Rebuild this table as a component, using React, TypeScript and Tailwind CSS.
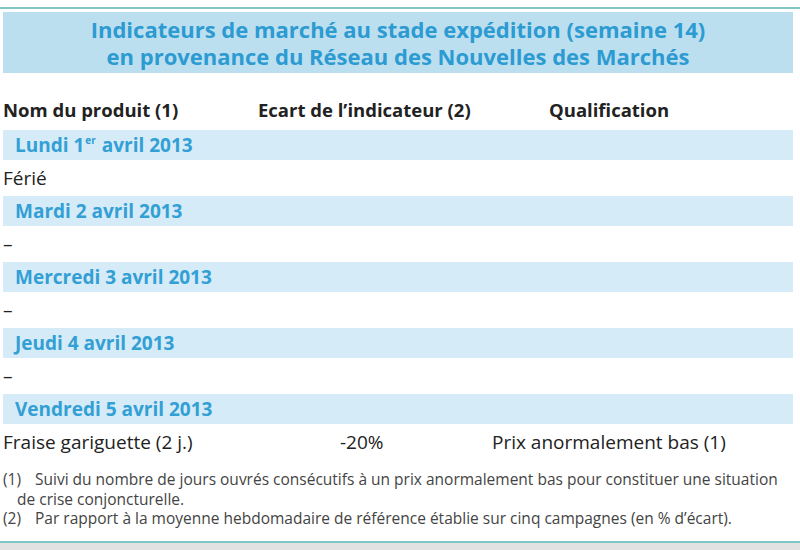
import React from "react";

const days = [
  { label: "Lundi 1", sup: "er", rest: "avril 2013", rows: [["Férié", "", ""]] },
  { label: "Mardi 2 avril 2013", rows: [["–", "", ""]] },
  { label: "Mercredi 3 avril 2013", rows: [["–", "", ""]] },
  { label: "Jeudi 4 avril 2013", rows: [["–", "", ""]] },
  {
    label: "Vendredi 5 avril 2013",
    rows: [["Fraise gariguette (2 j.)", "-20%", "Prix anormalement bas (1)"]],
  },
];

export default function App() {
  return (
    <div
      className="w-[800px] h-[550px] bg-white overflow-hidden flex flex-col"
      style={{ fontFamily: "'Open Sans', sans-serif" }}
    >
      <div className="h-[7px]" />
      <div className="h-[2px] bg-[#7fc6c4]" />
      <div className="px-[3px] pr-[7px] flex flex-col flex-1">
        <div className="mt-[3px] h-[61px] bg-[#bcdff0] flex flex-col items-center justify-center text-[#2c9bd2] font-bold text-[22px] leading-[27px]">
          <div>Indicateurs de marché au stade expédition (semaine 14)</div>
          <div>en provenance du Réseau des Nouvelles des Marchés</div>
        </div>

        <div className="h-[57px] flex items-end pb-[8px] text-[#222] font-bold text-[18.5px] leading-[24px]">
          <div className="w-[255px]">Nom du produit (1)</div>
          <div className="w-[291px]">Ecart de l’indicateur (2)</div>
          <div>Qualification</div>
        </div>

        {days.map((d) => (
          <div key={d.label}>
            <div className="h-[30px] bg-[#d5ebf7] flex items-center pl-[12px] text-[#329fd5] font-bold text-[19px]">
              {d.label}
              {d.sup && <sup className="text-[10px] ml-[1px] mr-[6px]">{d.sup}</sup>}
              {d.rest}
            </div>
            {d.rows.map((r, i) => (
              <div key={i} className="h-[36px] flex items-center text-[#222] text-[19px]">
                <div className="w-[337px]">{r[0]}</div>
                <div className="w-[152px]">{r[1]}</div>
                <div>{r[2]}</div>
              </div>
            ))}
          </div>
        ))}

        <div className="mt-[10px] text-[15.5px] leading-[19.5px] text-[#444]">
          <div className="flex">
            <span className="w-[32px] shrink-0">(1)</span>
            <span>Suivi du nombre de jours ouvrés consécutifs à un prix anormalement bas pour constituer une situation</span>
          </div>
          <div className="pl-[14px]">de crise conjoncturelle.</div>
          <div className="flex">
            <span className="w-[32px] shrink-0">(2)</span>
            <span>Par rapport à la moyenne hebdomadaire de référence établie sur cinq campagnes (en % d’écart).</span>
          </div>
        </div>
      </div>
      <div className="h-[2px] bg-[#7fc6c4]" />
      <div className="h-[7px] bg-[#e2e2e2]" />
    </div>
  );
}
